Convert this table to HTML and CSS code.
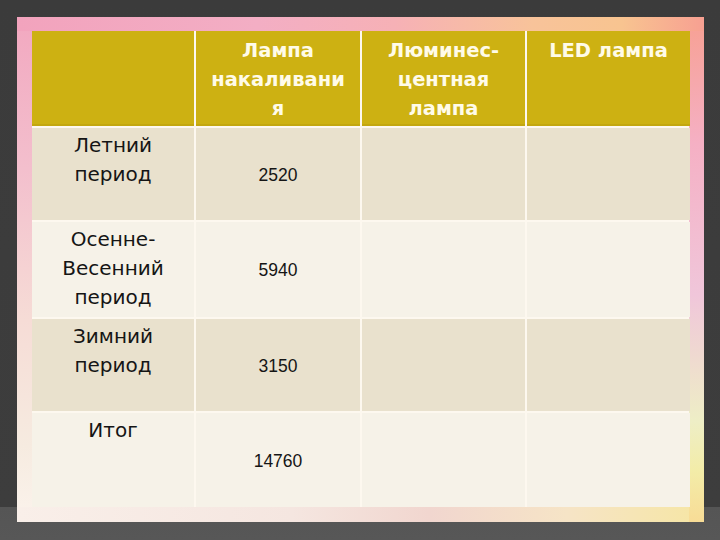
FILE: index.html
```html
<!DOCTYPE html>
<html lang="ru">
<head>
<meta charset="utf-8">
<link rel="stylesheet" href="styles.css">
</head>
<body>
<div class="slide">
  <div class="table">
    <div class="cell head"></div>
    <div class="cell head">Лампа<br>накаливани<br>я</div>
    <div class="cell head">Люминес-<br>центная<br>лампа</div>
    <div class="cell head">LED лампа</div>

    <div class="cell label odd">Летний<br>период</div>
    <div class="cell num odd">2520</div>
    <div class="cell odd"></div>
    <div class="cell odd"></div>

    <div class="cell label even">Осенне-<br>Весенний<br>период</div>
    <div class="cell num even">5940</div>
    <div class="cell even"></div>
    <div class="cell even"></div>

    <div class="cell label odd">Зимний<br>период</div>
    <div class="cell num odd">3150</div>
    <div class="cell odd"></div>
    <div class="cell odd"></div>

    <div class="cell label even">Итог</div>
    <div class="cell num even">14760</div>
    <div class="cell even"></div>
    <div class="cell even"></div>
  </div>
</div>
</body>
</html>
```

FILE: styles.css
```css
html, body {
  margin: 0;
  padding: 0;
}
body {
  width: 720px;
  height: 540px;
  overflow: hidden;
  background: linear-gradient(to bottom, #3b3b3b 0, #3d3d3d 507px, #555555 507px, #575757 540px);
  font-family: "Liberation Sans", Arial, sans-serif;
  padding-top: 17px;
  box-sizing: border-box;
}
.slide {
  margin-left: 17px;
  width: 687px;
  height: 505px;
  box-sizing: border-box;
  padding: 14px 15px 15px 15px;
  background:
    linear-gradient(to right, #f2a3bd 0%, #f3aec4 35%, #f6b1b6 55%, #f8c39a 75%, #f8c490 88%, #f7a092 100%) top left / 100% 14px no-repeat,
    linear-gradient(to bottom, #f7a092 0%, #f5b0c4 25%, #f0c6da 55%, #eeeec6 80%, #f3eca8 90%, #f8dc96 100%) top right / 15px 100% no-repeat,
    linear-gradient(to right, #f9efe9 0%, #f5e6e0 40%, #f1d6cf 60%, #f6e4c6 80%, #f6e6a4 100%) bottom left / 100% 15px no-repeat,
    linear-gradient(to bottom, #f2a8c0 0%, #f3bfcd 30%, #f6dcd6 60%, #f6ebe0 85%, #fbf3ec 100%) top left / 15px 100% no-repeat,
    #fbf3ea;
}
.table {
  display: grid;
  grid-template-columns: 162px 164px 163px 163px;
  grid-template-rows: 95px 92px 95px 92px 94px;
  gap: 2px;
  background: #fdf8ef;
  width: 657px;
  height: 476px;
}
.cell {
  text-align: center;
}
.head {
  background: #cdb112;
  box-shadow: inset 0 -2px 0 #c3a70f;
  color: #fffbe8;
  font-family: "DejaVu Sans", "Liberation Sans", sans-serif;
  font-weight: bold;
  font-size: 19.5px;
  line-height: 29px;
  padding-top: 5px;
}
.odd {
  background: #e9e1cd;
}
.even {
  background: #f6f2e8;
}
.label {
  color: #151515;
  font-family: "DejaVu Sans", "Liberation Sans", sans-serif;
  font-size: 20px;
  line-height: 29px;
  padding-top: 3px;
}
.num {
  display: flex;
  align-items: center;
  justify-content: center;
  color: #151515;
  font-size: 17.5px;
  padding-top: 2px;
}
```
